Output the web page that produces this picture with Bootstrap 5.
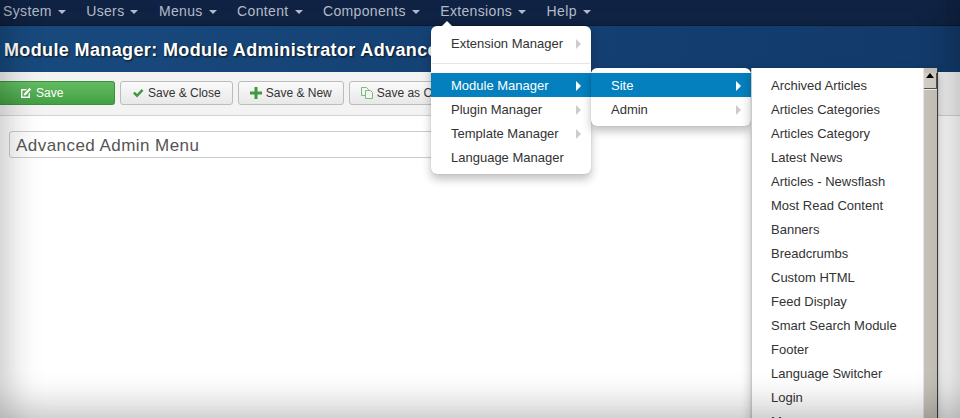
<!DOCTYPE html>
<html lang="en">
<head>
  <meta charset="UTF-8">
  <meta name="viewport" content="width=device-width, initial-scale=1.0">
  <title>Module Manager</title>
  <link href="https://cdn.jsdelivr.net/npm/bootstrap@5.3.0/dist/css/bootstrap.min.css" rel="stylesheet">
  <style>
    html, body { height: 100%; }
    body {
      background: #fff;
      font-family: "Liberation Sans", Arial, sans-serif;
      font-size: 13px;
      letter-spacing: 0;
      color: #333;
      overflow: hidden;
      position: relative;
    }
    .top-bar {
      height: 26px;
      background: linear-gradient(#122548, #0f2140);
      border-bottom: 1px solid #0b1a33;
      padding-left: 3px;
      gap: 20.4px;
    }
    .top-link {
      color: #b4bcc8;
      font-size: 14px;
      line-height: 22px;
      text-decoration: none;
      letter-spacing: .35px;
    }
    .top-link::after {
      content: "";
      display: inline-block;
      margin-left: 6px;
      vertical-align: 2px;
      border-top: 4px solid #b4bcc8;
      border-left: 4px solid transparent;
      border-right: 4px solid transparent;
    }
    .page-head {
      height: 46px;
      background: linear-gradient(90deg, #184a7e, #143f72 60%, #123a6a);
      padding-left: 4px;
    }
    .page-head h1 {
      margin: 0;
      color: #fff;
      font-family: "Liberation Sans", Arial, sans-serif;
      font-size: 18px;
      font-weight: 700;
      letter-spacing: .37px;
      line-height: 48px;
      white-space: nowrap;
      text-shadow: 1px 1px 2px rgba(0,0,0,.75);
    }
    .tool-bar {
      height: 44px;
      background: #f3f3f3;
      border-bottom: 1px solid #d4d4d4;
      padding-top: 9px;
      gap: 5px;
    }
    .tool-btn {
      height: 24px;
      padding: 0 11px;
      font-size: 12px;
      line-height: 22px;
      letter-spacing: 0;
      color: #333;
      background: linear-gradient(#fafafa, #e8e8e8);
      border: 1px solid #bcbcbc;
      border-radius: 3px;
      white-space: nowrap;
      display: flex;
      align-items: center;
      gap: 4px;
    }
    .tool-btn svg { flex: none; }
    .btn-save {
      width: 115px;
      padding-left: 20px;
      color: #fff;
      background: linear-gradient(#62bd62, #44a044);
      border-color: #3f8f3f;
      border-left: 0;
      border-radius: 0 3px 3px 0;
    }
    .form-area { padding: 15px 0 0 9px; }
    .title-field {
      width: 500px;
      height: 27px;
      padding: 0 6px;
      border: 1px solid #ccc;
      border-radius: 3px;
      font-size: 17px;
      line-height: 27px;
      letter-spacing: .45px;
      color: #555;
    }
    .fly-menu {
      position: absolute;
      background: #fff;
      border-radius: 6px;
      box-shadow: 0 5px 10px rgba(0,0,0,.25), 0 0 1px rgba(0,0,0,.3);
      margin: 0;
      padding: 0;
      list-style: none;
    }
    .fly-menu li a {
      display: flex;
      justify-content: space-between;
      align-items: center;
      height: 24px;
      padding: 1px 10px 0 20px;
      color: #333;
      text-decoration: none;
      white-space: nowrap;
    }
    .fly-menu li a.has-sub::after {
      content: "";
      border-left: 5px solid #ccc;
      border-top: 5px solid transparent;
      border-bottom: 5px solid transparent;
    }
    .fly-menu li.on a { background: #0480be; color: #fff; }
    .fly-menu li.on a.has-sub::after { border-left-color: #fff; }
    .fly-sep { height: 1px; background: #e5e5e5; margin: 8px 1px 9px; }
    .menu-ext { left: 431px; top: 26px; width: 160px; padding: 5px 0; }
    .menu-ext::before {
      content: "";
      position: absolute;
      top: -5px;
      left: 11px;
      border-bottom: 5px solid #fff;
      border-left: 5px solid transparent;
      border-right: 5px solid transparent;
    }
    .menu-site { left: 591px; top: 68px; width: 160px; padding: 5px 0; }
    .menu-mods {
      left: 751px;
      top: 68px;
      width: 187px;
      height: 350px;
      padding: 5px 0 0;
      border-radius: 0;
      overflow: hidden;
      border-left: 1px solid #ccc;
    }
    .menu-mods li a { padding-left: 19px; }
    .mods-scroll {
      position: absolute;
      top: 0;
      right: 0;
      width: 15px;
      height: 100%;
      background: #c8c4bc;
      border-left: 1px solid #e8e6e1;
      border-right: 1px solid #3c3c3c;
    }
    .mods-up {
      height: 16px;
      background: #d4d0c8;
      border-bottom: 1px solid #55534f;
      border-right: 1px solid #55534f;
      box-shadow: 0 1px 0 #eee;
    }
    .mods-up::before {
      content: "";
      display: block;
      width: 0;
      margin: 5px 0 0 2px;
      border-bottom: 5px solid #000;
      border-left: 4px solid transparent;
      border-right: 4px solid transparent;
    }
    .vignette {
      position: absolute;
      inset: 0;
      pointer-events: none;
      box-shadow: inset 0 -32px 30px -14px rgba(0,0,0,.16), inset 30px 0 30px -16px rgba(0,0,0,.16), inset -30px 0 30px -16px rgba(0,0,0,.16);
    }
  </style>
</head>
<body>
  <nav class="top-bar d-flex align-items-start">
    <a class="top-link" href="#">System</a>
    <a class="top-link" href="#">Users</a>
    <a class="top-link" href="#">Menus</a>
    <a class="top-link" href="#">Content</a>
    <a class="top-link" href="#">Components</a>
    <a class="top-link" href="#">Extensions</a>
    <a class="top-link" href="#">Help</a>
  </nav>

  <header class="page-head">
    <h1>Module Manager: Module Administrator Advanced</h1>
  </header>

  <div class="tool-bar d-flex align-items-start">
    <button class="tool-btn btn-save" type="button">
      <svg width="12" height="12" viewBox="0 0 12 12"><path d="M1 2h6L5.500 3.500H2.500v6h6V7L10 5.500V11H1z" fill="#fff"/><path d="M4 6.500 9.500.8l1.700 1.700L5.700 8.200 3.700 8.500z" fill="#fff"/></svg>
      Save
    </button>
    <button class="tool-btn" type="button">
      <svg width="12" height="10" viewBox="0 0 13 11"><path d="M1 6l2-2 2.500 2.500L10.500 1l2 2-7 7.500z" fill="#3f9a3f"/></svg>
      Save &amp; Close
    </button>
    <button class="tool-btn" type="button">
      <svg width="12" height="12" viewBox="0 0 12 12"><path d="M4.500 0h3v4.500H12v3H7.500V12h-3V7.500H0v-3h4.500z" fill="#3f9a3f"/></svg>
      Save &amp; New
    </button>
    <button class="tool-btn" type="button">
      <svg width="12" height="12" viewBox="0 0 12 12" fill="none" stroke="#7cbb7c"><path d="M.5.500h5l2 2v6h-7z"/><path d="M4.500 3.500h5l2 2v6h-7z" fill="#f4f4f4"/></svg>
      Save as Copy
    </button>
  </div>

  <div class="form-area">
    <div class="title-field">Advanced Admin Menu</div>
  </div>

  <ul class="fly-menu menu-ext">
    <li><a class="has-sub" href="#">Extension Manager</a></li>
    <li class="fly-sep"></li>
    <li class="on"><a class="has-sub" href="#">Module Manager</a></li>
    <li><a class="has-sub" href="#">Plugin Manager</a></li>
    <li><a class="has-sub" href="#">Template Manager</a></li>
    <li><a href="#">Language Manager</a></li>
  </ul>

  <ul class="fly-menu menu-site">
    <li class="on"><a class="has-sub" href="#">Site</a></li>
    <li><a class="has-sub" href="#">Admin</a></li>
  </ul>

  <div class="fly-menu menu-mods">
    <ul class="list-unstyled m-0">
      <li><a href="#">Archived Articles</a></li>
      <li><a href="#">Articles Categories</a></li>
      <li><a href="#">Articles Category</a></li>
      <li><a href="#">Latest News</a></li>
      <li><a href="#">Articles - Newsflash</a></li>
      <li><a href="#">Most Read Content</a></li>
      <li><a href="#">Banners</a></li>
      <li><a href="#">Breadcrumbs</a></li>
      <li><a href="#">Custom HTML</a></li>
      <li><a href="#">Feed Display</a></li>
      <li><a href="#">Smart Search Module</a></li>
      <li><a href="#">Footer</a></li>
      <li><a href="#">Language Switcher</a></li>
      <li><a href="#">Login</a></li>
      <li><a href="#">Menu</a></li>
    </ul>
    <div class="mods-scroll"><div class="mods-up"></div></div>
  </div>

  <div class="vignette"></div>

  <script src="https://cdn.jsdelivr.net/npm/bootstrap@5.3.0/dist/js/bootstrap.bundle.min.js"></script>
</body>
</html>
